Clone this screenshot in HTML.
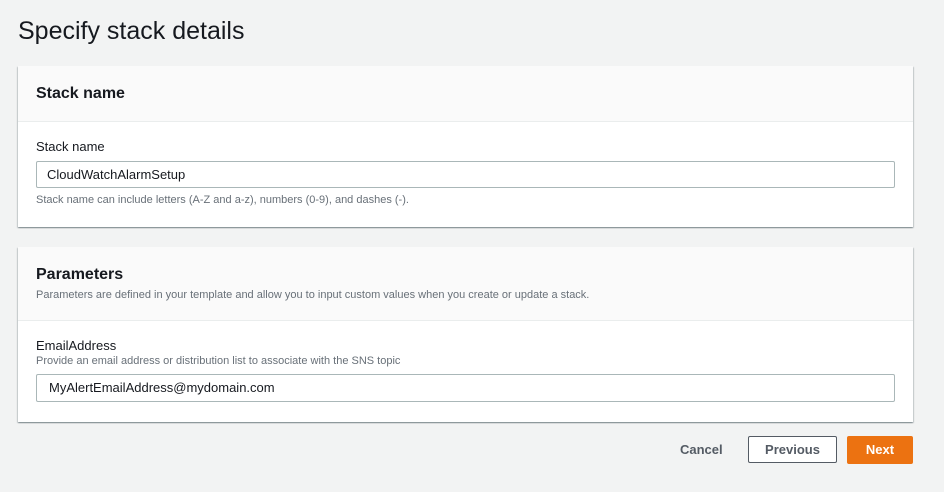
<!DOCTYPE html>
<html><head><style>
body{margin:0;width:944px;height:492px;background:#f2f3f3;font-family:"Liberation Sans",sans-serif;color:#16191f;position:relative;overflow:hidden}
.a{position:absolute;white-space:nowrap}
.panel{position:absolute;left:18px;width:895px;background:#fff;box-shadow:0 1px 1px rgba(0,28,36,.3),1px 1px 1px rgba(0,28,36,.15),-1px 1px 1px rgba(0,28,36,.15)}
.hd{background:#fafafa;border-bottom:1px solid #eaeded;position:absolute;left:0;top:0;width:100%}
.inp{position:absolute;left:18px;width:859px;height:26px;border:1px solid #aab7b8;border-radius:2px;background:#fff;font-size:13px;line-height:26px;box-sizing:border-box;padding-left:10px}
.small{font-size:11px;color:#687078}
</style></head><body>
<div class="a" style="left:18px;top:17px;font-size:25px;color:#16191f">Specify stack details</div>
<div class="panel" style="top:66px;height:161px">
 <div class="hd" style="height:55px"></div>
 <div class="a" style="left:18px;top:19px;font-size:16px;font-weight:bold">Stack name</div>
 <div class="a" style="left:18px;top:73px;font-size:13px">Stack name</div>
 <div class="inp" style="top:95px;height:27px">CloudWatchAlarmSetup</div>
 <div class="a small" style="left:18px;top:128px">Stack name can include letters (A-Z and a-z), numbers (0-9), and dashes (-).</div>
</div>
<div class="panel" style="top:247px;height:175px">
 <div class="hd" style="height:73px"></div>
 <div class="a" style="left:18px;top:19px;font-size:16px;font-weight:bold">Parameters</div>
 <div class="a small" style="left:18px;top:42px">Parameters are defined in your template and allow you to input custom values when you create or update a stack.</div>
 <div class="a" style="left:18px;top:91px;font-size:13px">EmailAddress</div>
 <div class="a small" style="left:18px;top:108px">Provide an email address or distribution list to associate with the SNS topic</div>
 <div class="inp" style="top:127px;height:28px;padding-left:12px">MyAlertEmailAddress@mydomain.com</div>
</div>
<div class="a" style="left:680px;top:442px;font-size:13px;font-weight:bold;color:#545b64">Cancel</div>
<div class="a" style="left:748px;top:436px;width:89px;height:27px;border:1px solid #545b64;box-sizing:border-box;background:#fff;border-radius:2px;text-align:center;line-height:25px;font-size:13px;font-weight:bold;color:#545b64">Previous</div>
<div class="a" style="left:847px;top:436px;width:66px;height:28px;background:#ec7211;border-radius:2px;text-align:center;line-height:27px;font-size:13px;font-weight:bold;color:#fff">Next</div>
</body></html>
